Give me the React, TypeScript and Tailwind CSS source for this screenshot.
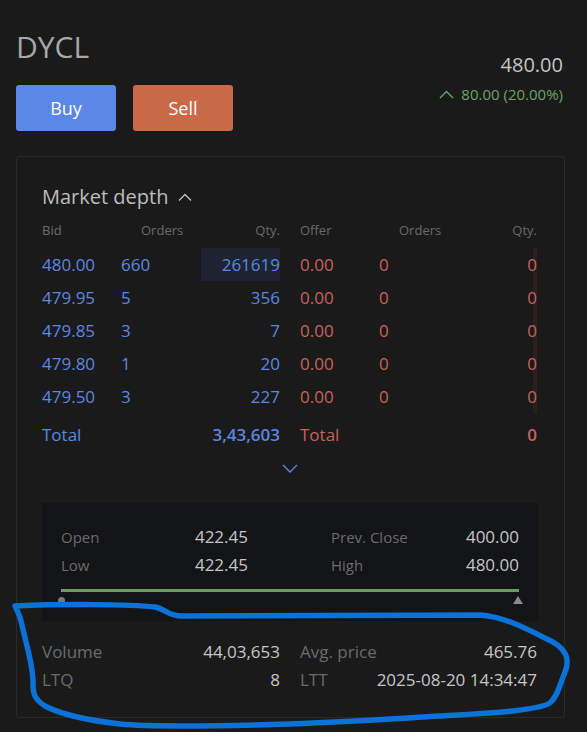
import React from "react";

const bids = [
  { price: "480.00", orders: "660", qty: "261619", hl: true },
  { price: "479.95", orders: "5", qty: "356", hl: false },
  { price: "479.85", orders: "3", qty: "7", hl: false },
  { price: "479.80", orders: "1", qty: "20", hl: false },
  { price: "479.50", orders: "3", qty: "227", hl: false },
];

export default function App() {
  return (
    <div
      className="relative min-h-[732px] w-[587px] bg-[#1a1a1a] pl-[16px] pr-[22px] pt-[27px]"
      style={{ fontFamily: '"Open Sans", "Noto Sans", sans-serif' }}
    >
      {/* header */}
      <div className="flex items-start justify-between pr-[2px]">
        <div className="flex flex-col">
          <div className="text-[30px] leading-[40px] text-[#a8a8a8]">DYCL</div>
          <div className="mt-[18px] flex gap-[17px]">
            <button className="flex h-[46px] w-[100px] items-center justify-center rounded-[3px] bg-[#5a87e8] text-[18px] text-white">
              Buy
            </button>
            <button className="flex h-[46px] w-[100px] items-center justify-center rounded-[3px] bg-[#c86948] text-[18px] text-white">
              Sell
            </button>
          </div>
        </div>
        <div className="mt-[24px] flex flex-col items-end">
          <div className="text-[20px] leading-[28px] text-[#c4c4c4]">480.00</div>
          <div className="mt-[5px] flex items-center gap-[7px] text-[15px] leading-[20px] text-[#6aa563]">
            <svg width="15" height="9" viewBox="0 0 15 9" fill="none">
              <path d="M1 8 L7.5 1.5 L14 8" stroke="#6aa563" strokeWidth="1.4" />
            </svg>
            <span>80.00 (20.00%)</span>
          </div>
        </div>
      </div>

      {/* card */}
      <div className="mt-[25px] w-[549px] rounded-[3px] border border-[#2a2a2a] pb-[23px] pl-[25px] pr-[27px] pt-[26px]">
        <div className="flex h-[28px] items-center gap-[10px] text-[20px] leading-[28px] text-[#bdbdbd]">
          <span>Market depth</span>
          <svg width="14" height="8" viewBox="0 0 14 8" fill="none">
            <path d="M1 7.5 L7 1.5 L13 7.5" stroke="#bdbdbd" strokeWidth="1.4" />
          </svg>
        </div>

        {/* depth table */}
        <div className="mt-[11px] grid grid-cols-[238px_237px] gap-x-[20px]">
          <div className="grid h-[16px] grid-cols-[99px_60px_79px] text-[13px] leading-[16px] text-[#6a6a6a]">
            <span>Bid</span>
            <span>Orders</span>
            <span className="text-right">Qty.</span>
          </div>
          <div className="grid h-[16px] grid-cols-[99px_59px_79px] text-[13px] leading-[16px] text-[#6a6a6a]">
            <span>Offer</span>
            <span>Orders</span>
            <span className="text-right">Qty.</span>
          </div>
        </div>

        <div className="mt-[10px] grid grid-cols-[238px_237px] gap-x-[20px] text-[17px]">
          <div className="flex flex-col text-[#5b88e0]">
            {bids.map((b) => (
              <div key={b.price} className="grid h-[33px] grid-cols-[79px_80px_79px] items-center">
                <span>{b.price}</span>
                <span>{b.orders}</span>
                <span
                  className={
                    "flex h-[33px] items-center justify-end " + (b.hl ? "bg-[#1e2331]" : "")
                  }
                >
                  {b.qty}
                </span>
              </div>
            ))}
          </div>
          <div className="flex flex-col text-[#c9625a]">
            {bids.map((b) => (
              <div key={b.price} className="grid h-[33px] grid-cols-[79px_79px_79px] items-center">
                <span>0.00</span>
                <span>0</span>
                <span className="relative flex h-[33px] items-center justify-end">
                  <span className="absolute right-0 top-0 h-[33px] w-[4px] bg-[#2b201e]" />
                  <span className="relative">0</span>
                </span>
              </div>
            ))}
          </div>
        </div>

        {/* totals */}
        <div className="grid h-[44px] grid-cols-[238px_237px] items-center gap-x-[20px] text-[17px]">
          <div className="flex items-center justify-between text-[#5b88e0]">
            <span>Total</span>
            <span className="font-semibold">3,43,603</span>
          </div>
          <div className="flex items-center justify-between text-[#c9625a]">
            <span>Total</span>
            <span className="font-semibold">0</span>
          </div>
        </div>

        <div className="flex h-[22px] items-center justify-center">
          <svg width="16" height="9" viewBox="0 0 16 9" fill="none">
            <path d="M1 1 L8 8 L15 1" stroke="#5b88e0" strokeWidth="1.4" />
          </svg>
        </div>

        {/* OHLC box */}
        <div className="mt-[24px] w-[496px] bg-[#131416] px-[19px] pb-[16px] pt-[20px]">
          <div className="grid grid-cols-[187px_188px] justify-between">
            <div className="flex flex-col">
              <div className="flex h-[28px] items-center justify-between">
                <span className="text-[15px] text-[#6b6b6b]">Open</span>
                <span className="text-[17px] text-[#c6c6c6]">422.45</span>
              </div>
              <div className="flex h-[28px] items-center justify-between">
                <span className="text-[15px] text-[#6b6b6b]">Low</span>
                <span className="text-[17px] text-[#c6c6c6]">422.45</span>
              </div>
            </div>
            <div className="flex flex-col">
              <div className="flex h-[28px] items-center justify-between">
                <span className="text-[15px] text-[#6b6b6b]">Prev. Close</span>
                <span className="text-[17px] text-[#c6c6c6]">400.00</span>
              </div>
              <div className="flex h-[28px] items-center justify-between">
                <span className="text-[15px] text-[#6b6b6b]">High</span>
                <span className="text-[17px] text-[#c6c6c6]">480.00</span>
              </div>
            </div>
          </div>
          <div className="mt-[10px] h-[3px] w-full bg-[#6b9b60]" />
          <div className="mt-[3px] flex h-[10px] items-center justify-between">
            <span className="-ml-[3px] h-[7px] w-[7px] rounded-full bg-[#7a7a7a]" />
            <svg width="10" height="8" viewBox="0 0 10 8" className="-mr-[4px]">
              <path d="M5 0 L10 8 L0 8 Z" fill="#8a8a8a" />
            </svg>
          </div>
        </div>

        {/* volume */}
        <div className="mt-[17px] grid grid-cols-[238px_237px] gap-x-[20px]">
          <div className="flex flex-col">
            <div className="flex h-[28px] items-center justify-between">
              <span className="text-[17px] text-[#6b6b6b]">Volume</span>
              <span className="text-[17px] text-[#c6c6c6]">44,03,653</span>
            </div>
            <div className="flex h-[28px] items-center justify-between">
              <span className="text-[17px] text-[#6b6b6b]">LTQ</span>
              <span className="text-[17px] text-[#c6c6c6]">8</span>
            </div>
          </div>
          <div className="flex flex-col">
            <div className="flex h-[28px] items-center justify-between">
              <span className="text-[17px] text-[#6b6b6b]">Avg. price</span>
              <span className="text-[17px] text-[#c6c6c6]">465.76</span>
            </div>
            <div className="flex h-[28px] items-center justify-between">
              <span className="text-[17px] text-[#6b6b6b]">LTT</span>
              <span className="text-[17px] text-[#c6c6c6]">2025-08-20 14:34:47</span>
            </div>
          </div>
        </div>
      </div>

      {/* hand-drawn annotation */}
      <svg
        className="pointer-events-none absolute left-0 top-0"
        width="587"
        height="732"
        viewBox="0 0 587 732"
        fill="none"
      >
        <path
          d="M15,606 C60,604 130,604 155,607 C166,609 168,616 182,616 L480,615 C505,617 525,628 545,638 C568,648 570,660 565,672 C560,684 558,696 550,703 C535,712 470,714 423,717 C380,720 330,722 290,724 C220,726 150,727 120,724 C85,720 60,714 45,706 C32,698 33,690 33,680 C32,660 25,640 22,625 C20,615 17,610 16,608"
          stroke="#0a72d8"
          strokeWidth="5.5"
          strokeLinecap="round"
          strokeLinejoin="round"
        />
      </svg>
    </div>
  );
}
